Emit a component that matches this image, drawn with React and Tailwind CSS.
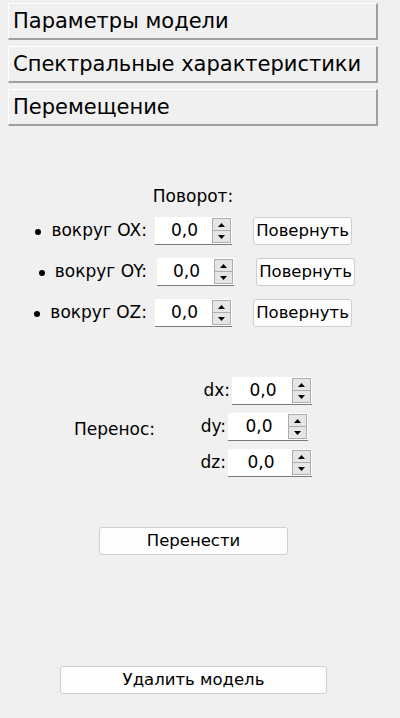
import React from "react";

const font = { fontFamily: '"DejaVu Sans", Verdana, sans-serif' };

function Header({ children }) {
  return (
    <div className="h-[37px] w-[370px] bg-[#f0f0f0] border-t border-l border-t-white border-l-white border-r-2 border-b-2 border-r-[#a0a0a0] border-b-[#a0a0a0] flex items-center pl-[4px] text-[21px] text-black leading-none">
      {children}
    </div>
  );
}

function Spin({ className = "" }) {
  return (
    <div className={"h-[28px] w-[77px] bg-white border-b border-b-[#7a7a7a] flex items-stretch " + className}>
      <div className="flex-1 flex items-center justify-center text-[17px] pl-[2px]">0,0</div>
      <div className="w-[20px] flex flex-col py-[1px] pr-[1px] bg-white">
        <div className="flex-1 border border-[#adadad] bg-[#e5e5e5] flex items-center justify-center">
          <svg width="7" height="4" viewBox="0 0 7 4"><path d="M3.5 0 L7 4 L0 4 Z" fill="#000" /></svg>
        </div>
        <div className="flex-1 border border-t-0 border-[#adadad] bg-[#e5e5e5] flex items-center justify-center">
          <svg width="7" height="4" viewBox="0 0 7 4"><path d="M0 0 L7 0 L3.5 4 Z" fill="#000" /></svg>
        </div>
      </div>
    </div>
  );
}

function Btn({ children, className = "" }) {
  return (
    <div className={"h-[28px] bg-[#fdfdfd] border border-[#cfcfcf] rounded-[3px] flex items-center justify-center text-[16.5px] text-black whitespace-nowrap " + className}>
      {children}
    </div>
  );
}

function RotRow({ axis, shift = 0 }) {
  return (
    <div className="flex items-center h-[28px]">
      <div className="w-[147px] flex items-center justify-end text-[17px] whitespace-nowrap">
        <span className="w-[6px] h-[6px] rounded-full bg-black mr-[10px] mt-[1px]"></span>
        <span>вокруг {axis}:</span>
      </div>
      <Spin className={shift ? "ml-[10px]" : "ml-[8px]"} />
      <Btn className={"w-[99px] " + (shift ? "ml-[22px]" : "ml-[21px]")}>Повернуть</Btn>
    </div>
  );
}

export default function App() {
  return (
    <div className="w-[400px] h-[718px] bg-[#f0f0f0] text-black overflow-hidden" style={font}>
      <div className="flex flex-col gap-[6px] pt-[3px] pl-[8px]">
        <Header>Параметры модели</Header>
        <Header>Спектральные характеристики</Header>
        <Header>Перемещение</Header>
      </div>

      <div className="mt-[62px] flex flex-col">
        <div className="text-[17px] leading-none text-center w-[386px] h-[18px]">Поворот:</div>
        <div className="mt-[11px] flex flex-col gap-[13px]">
          <RotRow axis="OX" />
          <RotRow axis="OY" shift={1} />
          <RotRow axis="OZ" />
        </div>
      </div>

      <div className="mt-[50px] flex items-center">
        <div className="w-[153px] pl-[74px] text-[17px] pt-[6px] whitespace-nowrap">Перенос:</div>
        <div className="flex flex-col gap-[8px] items-end w-[159px]">
          <div className="flex items-center">
            <span className="text-[17px] mr-[2px]">dx:</span>
            <Spin className="w-[80px]" />
          </div>
          <div className="flex items-center pr-[4px]">
            <span className="text-[17px] mr-[2px]">dy:</span>
            <Spin className="w-[80px]" />
          </div>
          <div className="flex items-center">
            <span className="text-[17px] mr-[2px]">dz:</span>
            <Spin className="w-[84px]" />
          </div>
        </div>
      </div>

      <div className="mt-[50px] pl-[99px]">
        <Btn className="w-[189px]">Перенести</Btn>
      </div>

      <div className="mt-[111px] pl-[60px]">
        <Btn className="w-[267px]">Удалить модель</Btn>
      </div>
    </div>
  );
}
